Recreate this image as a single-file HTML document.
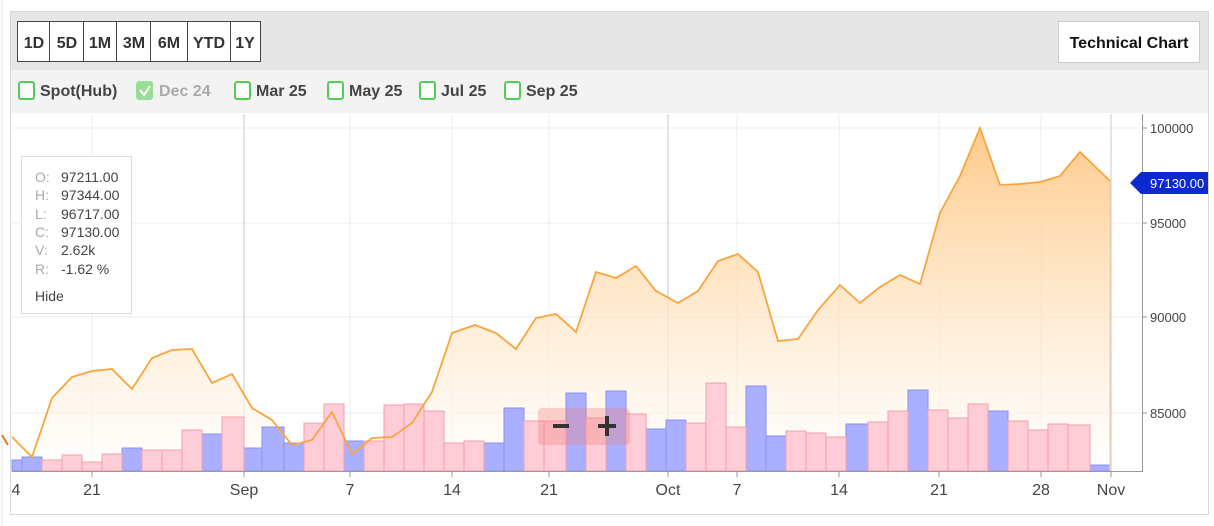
<!DOCTYPE html><html><head><style>body{margin:0;width:1214px;height:526px;background:#fff;overflow:hidden;font-family:"Liberation Sans",sans-serif}</style></head><body>
<svg width="1214" height="526" xmlns="http://www.w3.org/2000/svg" style="position:absolute;left:0;top:0">
<defs><linearGradient id="g" x1="0" y1="0" x2="0" y2="1" gradientUnits="userSpaceOnUse" x1v="0"><stop offset="0" stop-color="#ffc47a" stop-opacity="0.85"/><stop offset="1" stop-color="#fff4e6" stop-opacity="0.5"/></linearGradient>
<linearGradient id="g2" x1="0" y1="120" x2="0" y2="471" gradientUnits="userSpaceOnUse"><stop offset="0" stop-color="#ffc37a" stop-opacity="0.9"/><stop offset="1" stop-color="#ffffff" stop-opacity="0.6"/></linearGradient></defs>
<rect x="10.5" y="11.5" width="1198" height="503" fill="#fff" stroke="#d8d8d8"/>
<rect x="11" y="12" width="1197" height="58" fill="#e6e6e6"/>
<rect x="11" y="70" width="1197" height="43" fill="#f3f3f3"/>
<line x1="2" y1="0" x2="2" y2="526" stroke="#e6e6e6"/>
<!-- range buttons -->
<g font-size="16" font-weight="bold" fill="#333" text-anchor="middle">
<rect x="17.5" y="21.5" width="243" height="40" fill="#fff" stroke="#444"/>
<line x1="49.5" y1="21" x2="49.5" y2="62" stroke="#444"/><line x1="83.5" y1="21" x2="83.5" y2="62" stroke="#444"/><line x1="116.5" y1="21" x2="116.5" y2="62" stroke="#444"/><line x1="150.5" y1="21" x2="150.5" y2="62" stroke="#444"/><line x1="187.5" y1="21" x2="187.5" y2="62" stroke="#444"/><line x1="230.5" y1="21" x2="230.5" y2="62" stroke="#444"/>
<text x="34" y="48">1D</text><text x="67" y="48">5D</text><text x="100" y="48">1M</text><text x="134" y="48">3M</text><text x="169" y="48">6M</text><text x="209" y="48">YTD</text><text x="245" y="48">1Y</text>
</g>
<rect x="1058.5" y="21.5" width="141" height="41" fill="#fff" stroke="#ccc"/>
<text x="1129" y="48" font-size="16" font-weight="bold" text-anchor="middle" fill="#111">Technical Chart</text>
<!-- checkboxes -->
<g font-size="16" font-weight="bold" fill="#444">
<rect x="19" y="82" width="15" height="17" fill="#fff" stroke="#5c5" stroke-width="2" rx="2"/><text x="40" y="96">Spot(Hub)</text>
<rect x="137" y="82" width="15" height="17" fill="#9d9" stroke="#9d9" stroke-width="2" rx="2"/><path d="M140 90 l4 5 l6 -9" stroke="#fff" stroke-width="2" fill="none"/><text x="159" y="96" fill="#aaa">Dec 24</text>
<rect x="235" y="82" width="15" height="17" fill="#fff" stroke="#5c5" stroke-width="2" rx="2"/><text x="256" y="96">Mar 25</text>
<rect x="328" y="82" width="15" height="17" fill="#fff" stroke="#5c5" stroke-width="2" rx="2"/><text x="349" y="96">May 25</text>
<rect x="420" y="82" width="15" height="17" fill="#fff" stroke="#5c5" stroke-width="2" rx="2"/><text x="441" y="96">Jul 25</text>
<rect x="505" y="82" width="15" height="17" fill="#fff" stroke="#5c5" stroke-width="2" rx="2"/><text x="526" y="96">Sep 25</text>
</g>
<!-- grid -->
<g stroke="#ececec">
<line x1="12" y1="128" x2="1142" y2="128"/><line x1="12" y1="223" x2="1142" y2="223"/><line x1="12" y1="317" x2="1142" y2="317"/><line x1="12" y1="413" x2="1142" y2="413"/>
<line x1="92" y1="114" x2="92" y2="471"/><line x1="350" y1="114" x2="350" y2="471"/><line x1="452" y1="114" x2="452" y2="471"/><line x1="549" y1="114" x2="549" y2="471"/><line x1="737" y1="114" x2="737" y2="471"/><line x1="839" y1="114" x2="839" y2="471"/><line x1="939" y1="114" x2="939" y2="471"/><line x1="1041" y1="114" x2="1041" y2="471"/>
</g>
<g stroke="#c8c8c8"><line x1="244" y1="114" x2="244" y2="471"/><line x1="668" y1="114" x2="668" y2="471"/><line x1="1111" y1="114" x2="1111" y2="471"/></g>
<!-- area -->
<path d="M12 437 L32 457 L52 398 L72 377 L92 371 L112 369 L132 389 L152 358 L172 350 L192 349 L212 383 L232 374 L252 408 L272 420 L292 445 L312 440 L332 412 L352 454 L372 438 L392 437 L412 423 L432 392 L452 333 L475 325 L496 333 L516 349 L536 318 L556 314 L576 332 L596 272 L616 278 L636 266 L656 291 L678 303 L698 291 L718 261 L738 254 L758 272 L778 341 L798 339 L818 310 L840 285 L860 303 L880 287 L900 275 L920 284 L940 213 L960 176 L980 128 L1000 185 L1020 184 L1040 182 L1060 176 L1080 152 L1110 181 L1110 471 L12 471Z" fill="url(#g2)"/>
<!-- bars -->
<g stroke-width="1">
<g fill="#aab0ff" stroke="#8890ee">
<rect x="12" y="460" width="10" height="11"/><rect x="22" y="457" width="20" height="14"/><rect x="122" y="448" width="20" height="23"/><rect x="202" y="434" width="20" height="37"/><rect x="244" y="448" width="18" height="23"/><rect x="262" y="427" width="22" height="44"/><rect x="284" y="443" width="20" height="28"/><rect x="344" y="441" width="20" height="30"/><rect x="484" y="443" width="20" height="28"/><rect x="504" y="408" width="20" height="63"/><rect x="566" y="393" width="20" height="78"/><rect x="606" y="391" width="20" height="80"/><rect x="646" y="429" width="20" height="42"/><rect x="666" y="420" width="20" height="51"/><rect x="746" y="386" width="20" height="85"/><rect x="766" y="436" width="20" height="35"/><rect x="846" y="424" width="22" height="47"/><rect x="908" y="390" width="20" height="81"/><rect x="988" y="411" width="20" height="60"/><rect x="1090" y="465" width="20" height="6"/>
</g>
<g fill="#ffcdd8" stroke="#f5a0a8">
<rect x="42" y="460" width="20" height="11"/><rect x="62" y="455" width="20" height="16"/><rect x="82" y="462" width="20" height="9"/><rect x="102" y="454" width="20" height="17"/><rect x="142" y="450" width="20" height="21"/><rect x="162" y="450" width="20" height="21"/><rect x="182" y="430" width="20" height="41"/><rect x="222" y="417" width="22" height="54"/><rect x="304" y="423" width="20" height="48"/><rect x="324" y="404" width="20" height="67"/><rect x="364" y="441" width="20" height="30"/><rect x="384" y="405" width="20" height="66"/><rect x="404" y="404" width="20" height="67"/><rect x="424" y="411" width="20" height="60"/><rect x="444" y="443" width="20" height="28"/><rect x="464" y="441" width="20" height="30"/><rect x="524" y="421" width="20" height="50"/><rect x="544" y="421" width="22" height="50"/><rect x="586" y="418" width="20" height="53"/><rect x="626" y="414" width="20" height="57"/><rect x="686" y="423" width="20" height="48"/><rect x="706" y="383" width="20" height="88"/><rect x="726" y="427" width="20" height="44"/><rect x="786" y="431" width="20" height="40"/><rect x="806" y="433" width="20" height="38"/><rect x="826" y="437" width="20" height="34"/><rect x="868" y="422" width="20" height="49"/><rect x="888" y="411" width="20" height="60"/><rect x="928" y="410" width="20" height="61"/><rect x="948" y="418" width="20" height="53"/><rect x="968" y="404" width="20" height="67"/><rect x="1008" y="421" width="20" height="50"/><rect x="1028" y="430" width="20" height="41"/><rect x="1048" y="424" width="20" height="47"/><rect x="1068" y="425" width="22" height="46"/>
</g></g>
<path d="M12 437 L32 457 L52 398 L72 377 L92 371 L112 369 L132 389 L152 358 L172 350 L192 349 L212 383 L232 374 L252 408 L272 420 L292 445 L312 440 L332 412 L352 454 L372 438 L392 437 L412 423 L432 392 L452 333 L475 325 L496 333 L516 349 L536 318 L556 314 L576 332 L596 272 L616 278 L636 266 L656 291 L678 303 L698 291 L718 261 L738 254 L758 272 L778 341 L798 339 L818 310 L840 285 L860 303 L880 287 L900 275 L920 284 L940 213 L960 176 L980 128 L1000 185 L1020 184 L1040 182 L1060 176 L1080 152 L1110 181" fill="none" stroke="#f9a43c" stroke-width="1.8"/>
<line x1="1110" y1="181" x2="1110" y2="471" stroke="#ffd2a0"/>
<!-- zoom control -->
<rect x="538" y="408" width="92" height="37" rx="4" fill="#f08080" fill-opacity="0.35"/>
<rect x="553" y="424" width="16" height="4" fill="#333"/><rect x="598" y="424" width="18" height="4" fill="#333"/><rect x="605" y="416" width="4" height="20" fill="#333"/>
<!-- axes -->
<line x1="12" y1="471.5" x2="1142" y2="471.5" stroke="#999"/>
<line x1="1142.5" y1="114" x2="1142.5" y2="472" stroke="#999"/>
<g stroke="#999"><line x1="92" y1="471" x2="92" y2="477"/><line x1="244" y1="471" x2="244" y2="477"/><line x1="350" y1="471" x2="350" y2="477"/><line x1="452" y1="471" x2="452" y2="477"/><line x1="549" y1="471" x2="549" y2="477"/><line x1="668" y1="471" x2="668" y2="477"/><line x1="737" y1="471" x2="737" y2="477"/><line x1="839" y1="471" x2="839" y2="477"/><line x1="939" y1="471" x2="939" y2="477"/><line x1="1041" y1="471" x2="1041" y2="477"/><line x1="1111" y1="471" x2="1111" y2="477"/>
<line x1="1142" y1="128" x2="1147" y2="128"/><line x1="1142" y1="223" x2="1147" y2="223"/><line x1="1142" y1="317" x2="1147" y2="317"/><line x1="1142" y1="413" x2="1147" y2="413"/></g>
<g font-size="16" fill="#444" text-anchor="middle">
<text x="16" y="495">4</text><text x="92" y="495">21</text><text x="244" y="495">Sep</text><text x="350" y="495">7</text><text x="452" y="495">14</text><text x="549" y="495">21</text><text x="668" y="495">Oct</text><text x="737" y="495">7</text><text x="839" y="495">14</text><text x="939" y="495">21</text><text x="1041" y="495">28</text><text x="1111" y="495">Nov</text>
</g>
<g font-size="13" fill="#444"><text x="1150" y="133">100000</text><text x="1150" y="228">95000</text><text x="1150" y="322">90000</text><text x="1150" y="418">85000</text></g>
<path d="M1130 183 L1141 172 L1208 172 L1208 194 L1141 194Z" fill="#0a2ad0"/>
<text x="1150" y="188" font-size="13" fill="#fff">97130.00</text>
<line x1="2" y1="435" x2="8" y2="445" stroke="#e07a20" stroke-width="2"/>
<!-- tooltip -->
<rect x="21.5" y="156.5" width="110" height="157" fill="#fff" fill-opacity="0.9" stroke="#ddd"/>
<g font-size="14"><g fill="#aaa"><text x="35" y="182">O:</text><text x="35" y="200">H:</text><text x="35" y="219">L:</text><text x="35" y="237">C:</text><text x="35" y="255">V:</text><text x="35" y="274">R:</text></g>
<g fill="#444"><text x="61" y="182">97211.00</text><text x="61" y="200">97344.00</text><text x="61" y="219">96717.00</text><text x="61" y="237">97130.00</text><text x="61" y="255">2.62k</text><text x="61" y="274">-1.62 %</text><text x="35" y="301">Hide</text></g></g>
</svg>
</body></html>
